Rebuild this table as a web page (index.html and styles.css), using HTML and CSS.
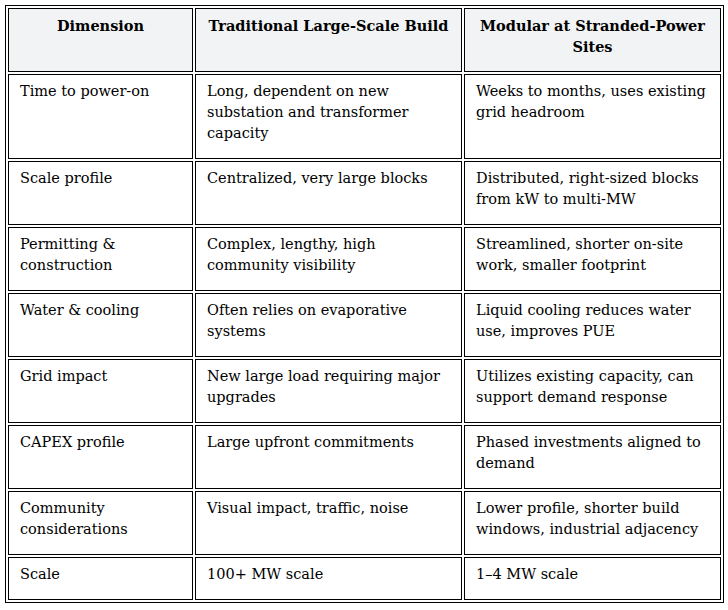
FILE: index.html
```html
<!DOCTYPE html>
<html lang="en">
<head>
<meta charset="utf-8">
<title>Comparison</title>
<link rel="stylesheet" href="styles.css">
</head>
<body>
<table class="compare">
  <colgroup>
    <col class="c1">
    <col class="c2">
    <col class="c3">
  </colgroup>
  <thead>
    <tr>
      <th>Dimension</th>
      <th>Traditional Large-Scale Build</th>
      <th>Modular at Stranded-Power Sites</th>
    </tr>
  </thead>
  <tbody>
    <tr>
      <td>Time to power-on</td>
      <td>Long, dependent on new substation and transformer capacity</td>
      <td>Weeks to months, uses existing grid headroom</td>
    </tr>
    <tr>
      <td>Scale profile</td>
      <td>Centralized, very large blocks</td>
      <td>Distributed, right-sized blocks from kW to multi-MW</td>
    </tr>
    <tr>
      <td>Permitting &amp; construction</td>
      <td>Complex, lengthy, high community visibility</td>
      <td>Streamlined, shorter on-site work, smaller footprint</td>
    </tr>
    <tr>
      <td>Water &amp; cooling</td>
      <td>Often relies on evaporative systems</td>
      <td>Liquid cooling reduces water use, improves PUE</td>
    </tr>
    <tr>
      <td>Grid impact</td>
      <td>New large load requiring major upgrades</td>
      <td>Utilizes existing capacity, can support demand response</td>
    </tr>
    <tr>
      <td>CAPEX profile</td>
      <td>Large upfront commitments</td>
      <td>Phased investments aligned to demand</td>
    </tr>
    <tr>
      <td>Community considerations</td>
      <td>Visual impact, traffic, noise</td>
      <td>Lower profile, shorter build windows, industrial adjacency</td>
    </tr>
    <tr>
      <td>Scale</td>
      <td>100+ MW scale</td>
      <td>1–4 MW scale</td>
    </tr>
  </tbody>
</table>
</body>
</html>
```

FILE: styles.css
```css
html, body {
  margin: 0;
  padding: 0;
  background: #ffffff;
}

body {
  padding: 5px 0 0 5px;
  font-family: "DejaVu Serif", "Liberation Serif", serif;
  font-size: 14.5px;
  line-height: 21px;
  color: #000000;
}

.compare {
  table-layout: fixed;
  width: 719px;
  border: 1px solid #000000;
  border-collapse: separate;
  border-spacing: 2px;
}

.compare .c1 { width: 185px; }
.compare .c2 { width: 267px; }
.compare .c3 { width: 257px; }

.compare th,
.compare td {
  border: 1px solid #000000;
  padding: 6px 11px 14px 11px;
  vertical-align: top;
  text-align: left;
}

.compare th {
  background: #f2f3f5;
  font-weight: bold;
  text-align: center;
}
```
